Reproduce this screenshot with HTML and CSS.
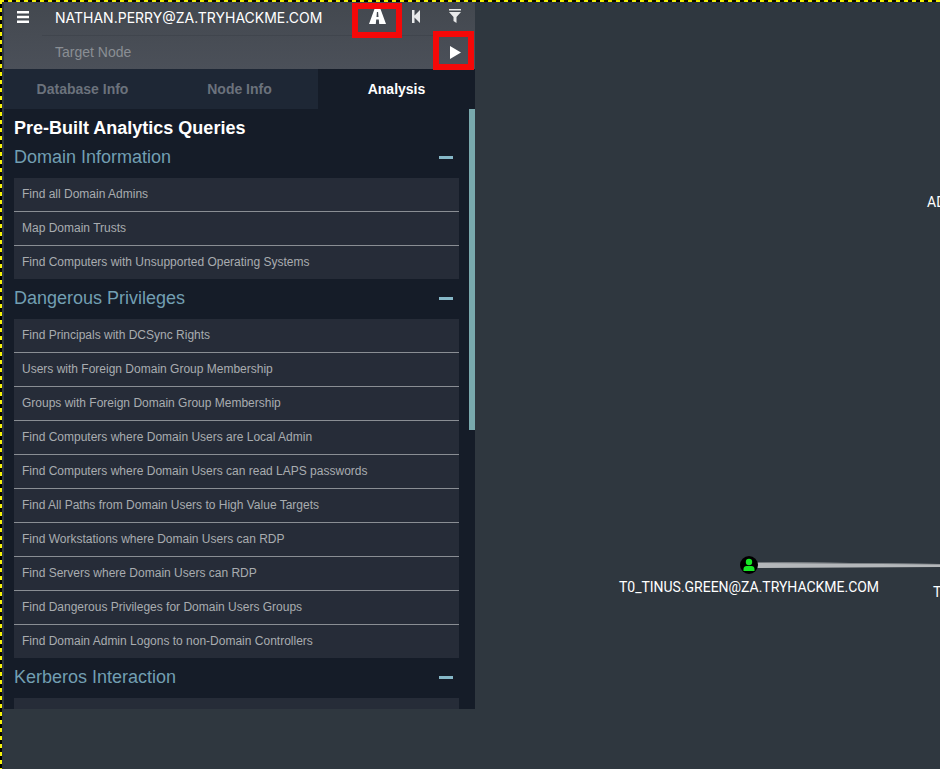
FILE: index.html
```html
<!DOCTYPE html>
<html lang="en">
<head>
    <meta charset="UTF-8">
    <meta name="viewport" content="width=device-width, initial-scale=1.0">
    <title>BloodHound</title>
    <link rel="stylesheet" href="styles.css">
</head>
<body>
    <div class="graph">
        <svg class="edge" width="183" height="8" viewBox="0 0 183 8">
            <polygon points="0,0 183,2 183,5 0,6" fill="#b4b7ba"/>
            <polygon points="0,0 183,2 183,2.600 0,1" fill="#70757a"/>
        </svg>
        <svg class="node" width="18" height="18" viewBox="0 0 18 18">
            <circle cx="9" cy="9" r="9" fill="#000"/>
            <circle cx="9" cy="6" r="3.2" fill="#17e625"/>
            <path d="M3.500 15v-2c0-2 1.500-3 3-3h5c1.500 0 3 1 3 3v2z" fill="#17e625"/>
        </svg>
        <span class="node-label label-tinus">T0_TINUS.GREEN@ZA.TRYHACKME.COM</span>
        <span class="node-label label-ad">AD</span>
        <span class="node-label label-t">T</span>
    </div>

    <div class="panel">
        <div class="search">
            <div class="search-row">
                <button class="menu-btn">
                    <svg width="12" height="12" viewBox="0 0 12 12"><path d="M0 0h12v2.600H0zM0 4.700h12v2.600H0zM0 9.400h12V12H0z" fill="#fff"/></svg>
                </button>
                <div class="search-field">
                    <span class="start-node">NATHAN.PERRY@ZA.TRYHACKME.COM</span>
                    <div class="tools">
                        <svg width="17" height="15" viewBox="0 0 17 15"><path fill-rule="evenodd" d="M5.500 0h6L17 15h-6.800L9.800 10.500H7.200L6.800 15H0zM7.900 3L7.500 8h2L9.100 3z" fill="#fff"/></svg>
                        <svg width="8" height="13" viewBox="0 0 8 13"><path d="M0 0h2.500v5.500L8 0v13L2.500 7.500V13H0z" fill="#e8e9ea"/></svg>
                        <svg width="12" height="14" viewBox="0 0 12 14"><path d="M0 0h12v1.500H0zM0 3h12L7.500 8v6L4.500 12V8z" fill="#e8e9ea"/></svg>
                    </div>
                </div>
            </div>
            <div class="search-row">
                <div class="menu-btn"></div>
                <div class="search-field no-line">
                    <span class="target-node">Target Node</span>
                    <svg class="play" width="11" height="13" viewBox="0 0 11 13"><path d="M0 0l11 6.500L0 13z" fill="#fff"/></svg>
                </div>
            </div>
        </div>

        <div class="tabs">
            <div class="tab">Database Info</div>
            <div class="tab">Node Info</div>
            <div class="tab active">Analysis</div>
        </div>

        <div class="content">
            <div class="scrollbar"></div>
            <h4>Pre-Built Analytics Queries</h4>

            <div class="section-head"><span>Domain Information</span><i class="minus"></i></div>
            <ul class="queries">
                <li>Find all Domain Admins</li>
                <li>Map Domain Trusts</li>
                <li>Find Computers with Unsupported Operating Systems</li>
            </ul>

            <div class="section-head"><span>Dangerous Privileges</span><i class="minus"></i></div>
            <ul class="queries">
                <li>Find Principals with DCSync Rights</li>
                <li>Users with Foreign Domain Group Membership</li>
                <li>Groups with Foreign Domain Group Membership</li>
                <li>Find Computers where Domain Users are Local Admin</li>
                <li>Find Computers where Domain Users can read LAPS passwords</li>
                <li>Find All Paths from Domain Users to High Value Targets</li>
                <li>Find Workstations where Domain Users can RDP</li>
                <li>Find Servers where Domain Users can RDP</li>
                <li>Find Dangerous Privileges for Domain Users Groups</li>
                <li>Find Domain Admin Logons to non-Domain Controllers</li>
            </ul>

            <div class="section-head"><span>Kerberos Interaction</span><i class="minus"></i></div>
            <ul class="queries">
                <li></li>
            </ul>
        </div>
    </div>

    <div class="redbox box-road"></div>
    <div class="redbox box-play"></div>
    <div class="dash dash-top"></div>
    <div class="dash dash-left"></div>
</body>
</html>
```

FILE: styles.css
```css
html, body {
    margin: 0;
    height: 100%;
    overflow: hidden;
}
body {
    background: #2f373f;
    font-family: "Liberation Sans", Arial, sans-serif;
    padding: 2px 0 0 4px;
    box-sizing: border-box;
}

/* graph canvas */
.graph {
    position: absolute;
    left: 0;
    top: 0;
    width: 940px;
    height: 769px;
    overflow: hidden;
}
.edge {
    position: absolute;
    left: 757px;
    top: 562px;
}
.node {
    position: absolute;
    left: 740px;
    top: 556px;
}
.node-label {
    position: absolute;
    font-family: Roboto, sans-serif;
    font-size: 14px;
    line-height: 16px;
    color: #fff;
    white-space: nowrap;
}
.label-tinus {
    left: 619px;
    top: 579px;
    letter-spacing: -0.02px;
}
.label-ad {
    left: 927px;
    top: 194px;
}
.label-t {
    left: 933px;
    top: 584px;
}

/* left panel */
.panel {
    position: relative;
    width: 471px;
    height: 707px;
    display: flex;
    flex-direction: column;
}
.search {
    height: 67px;
    background: linear-gradient(#43484f, #4b5059);
}
.search-row {
    display: flex;
    height: 33.5px;
}
.menu-btn {
    width: 38px;
    padding: 9px 0 0;
    border: 0;
    background: none;
    display: flex;
    justify-content: center;
    align-items: flex-start;
    box-sizing: border-box;
}
.search-field {
    flex: 1;
    display: flex;
    align-items: center;
    justify-content: space-between;
    padding-left: 13px;
    border-bottom: 1px solid #40454d;
    margin-right: 38px;
    box-sizing: border-box;
}
.no-line {
    border-bottom: 0;
    margin-right: 0;
    padding-right: 14px;
}
.start-node {
    font-family: Inter, sans-serif;
    font-size: 14px;
    color: #fff;
    white-space: nowrap;
    position: relative;
    top: -1px;
}
.target-node {
    font-family: "Liberation Sans", sans-serif;
    font-size: 14px;
    color: #8a8e94;
}
.tools {
    display: flex;
    align-items: center;
    gap: 25px;
    margin-right: -24px;
    padding-bottom: 4px;
}
.tools svg:last-child {
    margin-left: 4px;
}
.tools svg:first-child {
    margin-right: 1px;
}
.tabs {
    display: flex;
    height: 40px;
    flex-shrink: 0;
}
.tab {
    flex: 1;
    background: #1e2735;
    color: #6b727c;
    font-size: 14px;
    font-weight: bold;
    line-height: 41px;
    text-align: center;
}
.tab.active {
    background: #151c28;
    color: #fff;
}
.content {
    position: relative;
    flex: 1;
    overflow: hidden;
    background: #151c28;
    padding: 0 16px 0 10px;
}
.scrollbar {
    position: absolute;
    right: 0;
    top: 0;
    width: 6px;
    height: 321px;
    background: #79a9ad;
}
h4 {
    margin: 0;
    height: 29px;
    color: #fff;
    font-size: 18px;
    line-height: 38px;
    font-weight: bold;
}
.section-head {
    display: flex;
    justify-content: space-between;
    align-items: center;
    height: 40px;
    color: #729fb2;
    font-size: 18px;
    padding-right: 6px;
    box-sizing: border-box;
}
.section-head span {
    position: relative;
    top: -1px;
}
.minus {
    width: 14px;
    height: 3px;
    margin-top: -2px;
    background: #86b8c8;
}
.queries {
    list-style: none;
    margin: 0;
    padding: 0;
}
.queries li {
    height: 34px;
    box-sizing: border-box;
    padding-left: 8px;
    background: #262c38;
    border-bottom: 1px solid #8a8e94;
    color: #a9acb0;
    font-size: 12px;
    line-height: 32px;
}
.queries li:last-child {
    height: 33px;
    border-bottom: 0;
}

/* red annotation boxes drawn on top of the screenshot */
.redbox {
    position: absolute;
    border: 6px solid #f50808;
    box-sizing: border-box;
}
.box-road {
    left: 352px;
    top: 3px;
    width: 50px;
    height: 35px;
}
.box-play {
    left: 433px;
    top: 31px;
    width: 41px;
    height: 39px;
}

/* selection marquee */
.dash {
    position: absolute;
    left: 0;
    top: 0;
}
.dash-top {
    width: 100%;
    height: 2px;
    background: repeating-linear-gradient(90deg, #f5f10c 0 4px, #000 4px 8px);
}
.dash-left {
    width: 2px;
    height: 100%;
    background: repeating-linear-gradient(180deg, #f5f10c 0 4px, #000 4px 8px);
}
```
